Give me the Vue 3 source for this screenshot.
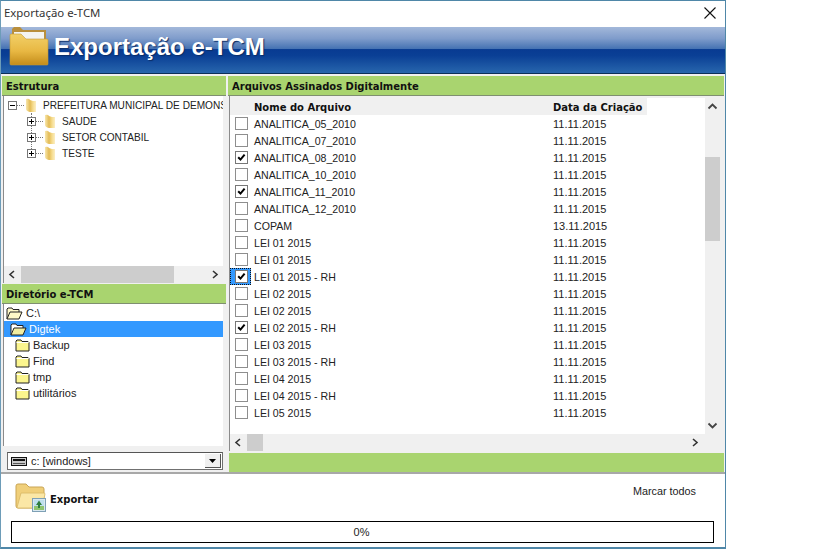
<template>
  <div class="window">
    <div class="titlebar">
      <span class="title-text">Exportação e-TCM</span>
      <svg class="close" width="12" height="12" viewBox="0 0 12 12"><path d="M0.5 0.5L11.5 11.5M11.5 0.5L0.5 11.5" stroke="#111" stroke-width="1.1" fill="none" /></svg>
    </div>

    <div class="banner">
      <svg class="banner-icon" width="40" height="40" viewBox="0 0 40 40">
        <defs>
          <linearGradient id="fold" x1="0" y1="0" x2="0" y2="1">
            <stop offset="0" stop-color="#f2d068" />
            <stop offset="0.55" stop-color="#e8b843" />
            <stop offset="1" stop-color="#c48c1a" />
          </linearGradient>
          <linearGradient id="leaf" x1="0" y1="0" x2="1" y2="0">
            <stop offset="0" stop-color="#f8e7ad" />
            <stop offset="0.4" stop-color="#e3bb55" />
            <stop offset="0.7" stop-color="#f6dc8e" />
            <stop offset="1" stop-color="#fbeec4" />
          </linearGradient>
        </defs>
        <path d="M3 3L5 1H11L14 4H37V14H3Z" fill="#b98f3c" />
        <rect x="5" y="6" width="30" height="9" fill="#f4f4f0" />
        <path d="M1 9Q1 8 2 8H12L17 13H38Q39 13 39 14V38Q39 39 38 39H2Q1 39 1 38Z" fill="url(#fold)" stroke="#c49a3a" stroke-width="0.6" />
      </svg>
      <span class="banner-text">Exportação e-TCM</span>
    </div>

    <div class="body">
      <div class="left">
        <div class="panel-head">Estrutura</div>
        <div class="tree-box">
          <div class="tree">
            <div class="tree-line"></div>
            <div v-for="node in tree" :key="node.name" class="tree-row" :class="{ child: node.child }">
              <span class="expander">
                <svg width="9" height="9" viewBox="0 0 9 9">
                  <rect x="0.5" y="0.5" width="8" height="8" fill="#fff" stroke="#777" />
                  <path :d="node.child ? 'M2 4.5H7M4.5 2V7' : 'M2 4.5H7'" stroke="#000" />
                </svg>
              </span>
              <span class="dash"></span>
              <svg class="tree-folder" width="13" height="15" viewBox="0 0 13 15">
                <path d="M1 1Q4 0 5 2L8 3H11V14L5 14Q1 13 1 11Z" fill="url(#leaf)" />
              </svg>
              <span class="tree-name">{{ node.name }}</span>
            </div>
          </div>
          <div class="hscroll">
            <svg class="arrow" width="16" height="17" viewBox="0 0 16 17"><path d="M10 5L6 8.5L10 12" stroke="#333" stroke-width="1.6" fill="none" /></svg>
            <div class="htrack"><div class="hthumb tree-thumb"></div></div>
            <svg class="arrow" width="16" height="17" viewBox="0 0 16 17"><path d="M6 5L10 8.5L6 12" stroke="#333" stroke-width="1.6" fill="none" /></svg>
          </div>
        </div>

        <div class="panel-head dir-head">Diretório e-TCM</div>
        <div class="dir-box">
          <div v-for="dir in dirs" :key="dir.name" class="dir-row" :class="[dir.kind, { selected: dir.selected }]">
            <svg v-if="dir.kind !== 'sub'" width="17" height="13" viewBox="0 0 17 13">
              <path d="M1 12V2L2 1H6L7 2.5H13V5" :fill="dir.selected ? '#fff' : '#fff9c8'" stroke="#222" />
              <path d="M1 12L4 5H16L13 12Z" :fill="dir.selected ? '#f2eea0' : '#fff9c8'" stroke="#222" />
            </svg>
            <svg v-else width="15" height="13" viewBox="0 0 15 13">
              <path d="M1 12V2L2 1H6L7 2.5H13L14 3.5V12Z" fill="#fbf58e" stroke="#222" />
              <path d="M1.5 3.5H13.5" stroke="#fff" />
            </svg>
            <span class="dir-name">{{ dir.name }}</span>
          </div>
        </div>
        <div class="combo">
          <svg width="16" height="9" viewBox="0 0 16 9">
            <rect x="0.5" y="0.5" width="15" height="8" fill="#c8c8c8" stroke="#111" />
            <rect x="2" y="2" width="12" height="2" fill="#111" />
            <rect x="2" y="6" width="12" height="1" fill="#555" />
          </svg>
          <span class="combo-text">c: [windows]</span>
          <span class="combo-btn"><svg width="7" height="4" viewBox="0 0 7 4"><path d="M0 0H7L3.5 4Z" fill="#000" /></svg></span>
        </div>
      </div>

      <div class="right">
        <div class="panel-head">Arquivos Assinados Digitalmente</div>
        <div class="list-box">
          <div class="list-main">
            <div class="list-view">
              <div class="list-header">
                <span class="col-name">Nome do Arquivo</span>
                <span class="col-date">Data da Criação</span>
              </div>
              <div v-for="(file, i) in files" :key="i" class="list-row">
                <span class="check-cell" :class="{ focused: file.focused }">
                  <span class="check" :class="{ on: file.checked }">
                    <svg v-if="file.checked" width="11" height="11" viewBox="0 0 11 11"><path d="M2.2 5.2L4.5 7.6L8.6 2.6" stroke="#000" stroke-width="2" fill="none" /></svg>
                  </span>
                </span>
                <span class="col-name">{{ file.name }}</span>
                <span class="col-date">{{ file.date }}</span>
              </div>
            </div>
            <div class="vscroll">
              <svg width="15" height="17" viewBox="0 0 15 17"><path d="M3.5 10.5L7.5 6.5L11.5 10.5" stroke="#444" stroke-width="1.8" fill="none" /></svg>
              <div class="vtrack"><div class="vthumb"></div></div>
              <svg width="15" height="17" viewBox="0 0 15 17"><path d="M3.5 6.5L7.5 10.5L11.5 6.5" stroke="#444" stroke-width="1.8" fill="none" /></svg>
            </div>
          </div>
          <div class="hscroll list-hscroll">
            <svg class="arrow" width="16" height="17" viewBox="0 0 16 17"><path d="M10 5L6 8.5L10 12" stroke="#333" stroke-width="1.6" fill="none" /></svg>
            <div class="htrack"><div class="hthumb list-thumb"></div></div>
            <svg class="arrow" width="16" height="17" viewBox="0 0 16 17"><path d="M6 5L10 8.5L6 12" stroke="#333" stroke-width="1.6" fill="none" /></svg>
          </div>
        </div>
        <div class="green-foot"></div>
      </div>
    </div>

    <div class="footer">
      <div class="actions">
        <div class="export">
          <svg width="32" height="30" viewBox="0 0 32 30">
            <path d="M1 3Q1 1 3 1H11L14 4H27Q29 4 29 6V24Q29 25 27 25H3Q1 25 1 23Z" fill="#f0cf7a" stroke="#c9a555" />
            <path d="M2 24.5L6 10H29Q30 10 30 11L27 25H3Z" fill="#fbe7a6" stroke="#d8b765" stroke-width="0.8" />
            <rect x="17.5" y="15.5" width="13" height="13" fill="#d9e8f0" stroke="#7ea0b5" />
            <rect x="19" y="17" width="10" height="6" fill="#bfe0ee" />
            <rect x="19" y="23" width="10" height="4" fill="#8fc46f" />
            <path d="M24 17.5L27 22H25V25H23V22H21Z" fill="#2f7d3f" />
          </svg>
          <span class="export-text">Exportar</span>
        </div>
        <span class="mark-all">Marcar todos</span>
      </div>
      <div class="progress"><span class="progress-text">0%</span></div>
    </div>
  </div>
</template>

<script setup>
const tree = [
  { name: 'PREFEITURA MUNICIPAL DE DEMONS', child: false },
  { name: 'SAUDE', child: true },
  { name: 'SETOR CONTABIL', child: true },
  { name: 'TESTE', child: true }
]

const dirs = [
  { name: 'C:\\', kind: 'root' },
  { name: 'Digtek', kind: 'open', selected: true },
  { name: 'Backup', kind: 'sub' },
  { name: 'Find', kind: 'sub' },
  { name: 'tmp', kind: 'sub' },
  { name: 'utilitários', kind: 'sub' }
]

const d = '11.11.2015'
const files = [
  { name: 'ANALITICA_05_2010', date: d },
  { name: 'ANALITICA_07_2010', date: d },
  { name: 'ANALITICA_08_2010', date: d, checked: true },
  { name: 'ANALITICA_10_2010', date: d },
  { name: 'ANALITICA_11_2010', date: d, checked: true },
  { name: 'ANALITICA_12_2010', date: d },
  { name: 'COPAM', date: '13.11.2015' },
  { name: 'LEI 01 2015', date: d },
  { name: 'LEI 01 2015', date: d },
  { name: 'LEI 01 2015 - RH', date: d, checked: true, focused: true },
  { name: 'LEI 02 2015', date: d },
  { name: 'LEI 02 2015', date: d },
  { name: 'LEI 02 2015 - RH', date: d, checked: true },
  { name: 'LEI 03 2015', date: d },
  { name: 'LEI 03 2015 - RH', date: d },
  { name: 'LEI 04 2015', date: d },
  { name: 'LEI 04 2015 - RH', date: d },
  { name: 'LEI 05 2015', date: d }
]
</script>

<style>
html, body { background: #fff; overflow: hidden; }
</style>

<style scoped>
.window {
  width: 726px;
  height: 549px;
  box-sizing: border-box;
  border: 1px solid #4f87a8;
  border-left-color: #6d9cb8;
  border-bottom-width: 2px;
  background: #fff;
  font-family: "Liberation Sans", Arial, sans-serif;
  font-size: 11px;
  color: #1a1a1a;
  display: flex;
  flex-direction: column;
  overflow: hidden;
}

.titlebar {
  height: 26px;
  flex: none;
  display: flex;
  align-items: center;
  justify-content: space-between;
  padding: 0 9px 2px 3px;
  box-sizing: border-box;
}
.title-text { font-size: 11.4px; color: #333; font-family: "Noto Sans", sans-serif; margin-top: -2px; }

.banner {
  height: 47px;
  flex: none;
  display: flex;
  align-items: flex-start;
  padding-left: 8px;
  box-sizing: border-box;
  border-bottom: 1px solid #0c2f57;
  background: linear-gradient(#a3b8da 0%, #7f9ccb 25%, #4673b3 47%, #083b92 49%, #0a3f95 62%, #2866ad 100%);
}
.banner-icon { flex: none; margin-top: -1px; }
.banner-text {
  margin-left: 5px;
  margin-top: 6px;
  font-size: 24px;
  line-height: 28px;
  font-weight: 700;
  color: #fff;
  text-shadow: 1px 1px 1px #0b2d66;
}

.body {
  flex: none;
  height: 400px;
  display: flex;
  background: #f0f0f0;
  border-bottom: 2px solid #a8a8a8;
  box-sizing: border-box;
  padding-top: 2px;
}

.left {
  width: 225px;
  flex: none;
  padding-left: 1px;
  box-sizing: border-box;
  display: flex;
  flex-direction: column;
}
.right {
  flex: 1;
  min-width: 0;
  margin-left: 2px;
  margin-right: 1px;
  display: flex;
  flex-direction: column;
}

.panel-head {
  height: 20px;
  flex: none;
  background: #a9d46f;
  border-bottom: 1px solid #7f8f70;
  box-sizing: border-box;
  padding-left: 4px;
  line-height: 21px;
  font-family: "DejaVu Sans", sans-serif;
  font-weight: 700;
  font-size: 10px;
  color: #111;
}

.tree-box {
  height: 187px;
  flex: none;
  margin: 0 3px 0 1px;
  background: #fff;
  border-left: 1px solid #8b8b8b;
  display: flex;
  flex-direction: column;
}
.tree {
  flex: 1;
  position: relative;
  overflow: hidden;
  padding-top: 1px;
  white-space: nowrap;
}
.tree-line {
  position: absolute;
  left: 27px;
  top: 17px;
  height: 40px;
  border-left: 1px dotted #777;
}
.tree-row {
  height: 16px;
  display: flex;
  align-items: center;
  padding-left: 4px;
  position: relative;
}
.tree-row.child { padding-left: 23px; }
.expander { display: flex; flex: none; }
.dash { width: 7px; border-top: 1px dotted #777; flex: none; }
.tree-folder { flex: none; margin-left: 1px; }
.tree-name { margin-left: 5px; color: #222; font-size: 10.1px; }

.hscroll {
  height: 17px;
  flex: none;
  display: flex;
  background: #f0f0f0;
}
.arrow { flex: none; }
.htrack { flex: 1; position: relative; }
.hthumb { height: 100%; background: #cdcdcd; }
.tree-thumb { width: 153px; margin-left: 1px; }
.list-thumb { width: 16px; margin-left: 1px; }

.dir-head { margin-top: 1px; }
.dir-box {
  height: 141px;
  flex: none;
  margin: 0 3px 0 1px;
  background: #fff;
  border-left: 1px solid #8b8b8b;
  padding-top: 1px;
}
.dir-row {
  height: 16px;
  display: flex;
  align-items: center;
  gap: 3px;
  padding-left: 2px;
  color: #222;
}
.dir-row.open { padding-left: 6px; gap: 2px; }
.dir-row.sub { padding-left: 11px; gap: 3px; }
.dir-row.selected { background: #3399ff; color: #fff; }
.dir-name { margin-top: -1px; }

.combo {
  height: 18px;
  flex: none;
  margin: 6px 0 0 5px;
  width: 216px;
  box-sizing: border-box;
  border: 1px solid #707070;
  border-top-color: #555;
  background: #fff;
  display: flex;
  align-items: center;
  padding-left: 3px;
  gap: 4px;
}
.combo-text { flex: 1; color: #222; }
.combo-btn {
  width: 16px;
  height: 14px;
  margin-right: 1px;
  background: #f0f0f0;
  border-right: 1px solid #555;
  border-bottom: 1px solid #555;
  box-sizing: border-box;
  display: flex;
  align-items: center;
  justify-content: center;
}

.list-box {
  height: 355px;
  flex: none;
  margin-left: 1px;
  margin-right: 3px;
  padding-top: 2px;
  box-sizing: border-box;
  background: #f0f0f0;
  border-left: 1px solid #8b8b8b;
  display: flex;
  flex-direction: column;
}
.list-main { flex: 1; display: flex; min-height: 0; }
.list-view { flex: none; width: 475px; background: #fff; overflow: hidden; }
.list-header {
  height: 17px;
  width: 417px;
  padding-top: 1px;
  box-sizing: border-box;
  background: #f0f0f0;
  display: flex;
  align-items: center;
  font-family: "DejaVu Sans", sans-serif;
  font-weight: 700;
  font-size: 10px;
  color: #111;
}
.list-header .col-name { margin-left: 24px; }
.list-row { height: 17px; display: flex; align-items: center; color: #222; }
.col-name { width: 299px; flex: none; }
.list-row .col-name { font-size: 10.6px; margin-top: 1px; }
.col-date { flex: none; }
.check-cell {
  width: 24px;
  height: 17px;
  flex: none;
  display: flex;
  align-items: center;
  padding-left: 5px;
  box-sizing: border-box;
}
.check-cell.focused {
  width: 21px;
  margin-right: 3px;
  background: #3399ff;
  outline: 1px dotted #111;
  outline-offset: -1px;
}
.check {
  width: 13px;
  height: 13px;
  box-sizing: border-box;
  border: 1px solid #8e8e8e;
  background: #fff;
  display: flex;
  align-items: center;
  justify-content: center;
}
.check.on { border-color: #777; }

.vscroll {
  flex: none;
  width: 15px;
  display: flex;
  flex-direction: column;
  background: #f0f0f0;
}
.vscroll svg { flex: none; }
.vtrack { flex: 1; padding-top: 42px; }
.vthumb { height: 84px; background: #cdcdcd; }

.list-hscroll { margin-right: 18px; }

.green-foot {
  height: 19px;
  flex: none;
  background: #a9d46f;
  margin-left: 1px;
  margin-top: 2px;
}

.footer {
  flex: 1;
  min-height: 0;
  padding: 0 10px;
  display: flex;
  flex-direction: column;
}
.actions {
  height: 47px;
  flex: none;
  display: flex;
  justify-content: space-between;
}
.export {
  display: flex;
  align-items: center;
  padding-left: 4px;
  margin-top: 7px;
  height: 34px;
  gap: 3px;
}
.export-text { font-family: "DejaVu Sans", sans-serif; font-weight: 700; font-size: 10px; color: #111; margin-top: 3px; }
.mark-all { margin: 11px 19px 0 0; color: #222; font-size: 10.8px; }
.progress {
  height: 22px;
  width: 703px;
  flex: none;
  box-sizing: border-box;
  border: 1px solid #000;
  display: flex;
  align-items: center;
  justify-content: center;
  color: #222;
}
.progress-text { margin-right: 2px; }
</style>
